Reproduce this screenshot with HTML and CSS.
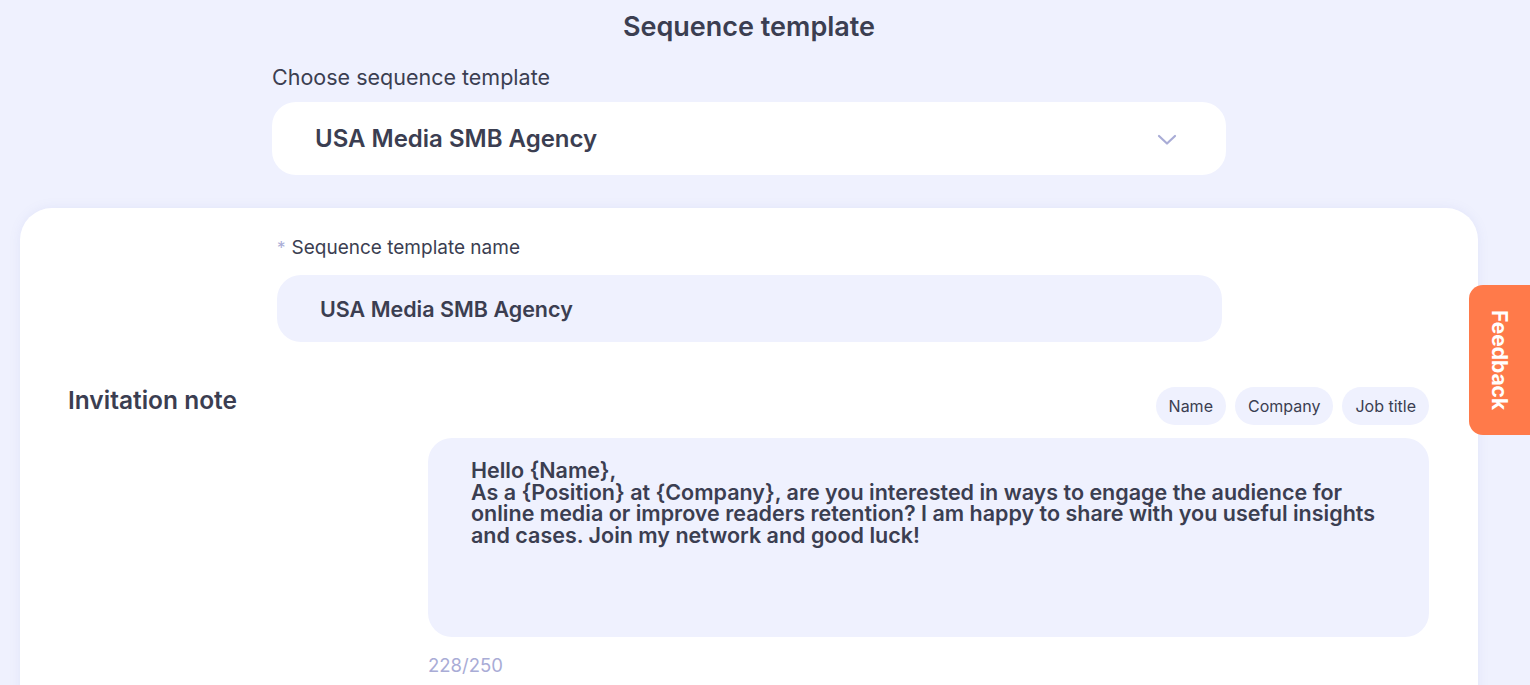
FILE: index.html
```html
<!DOCTYPE html>
<html lang="en">
<head>
<meta charset="utf-8">
<title>Sequence template</title>
<link rel="stylesheet" href="styles.css">
</head>
<body>
<main class="page">
  <h1 class="title">Sequence template</h1>
  <section class="choose">
    <div class="choose-label">Choose sequence template</div>
    <div class="select">
      <span class="select-value">USA Media SMB Agency</span>
      <svg class="chevron" width="20" height="12" viewBox="0 0 20 12"><path d="M2 2 L10 9.5 L18 2" fill="none" stroke="#a9acd6" stroke-width="2.2" stroke-linecap="round" stroke-linejoin="round"/></svg>
    </div>
  </section>
  <section class="card">
    <div class="field">
      <div class="field-label"><span class="req">*</span>Sequence template name</div>
      <div class="input">USA Media SMB Agency</div>
    </div>
    <div class="note-row">
      <div class="note-label">Invitation note</div>
      <div class="note-body">
        <div class="chips">
          <span class="chip">Name</span>
          <span class="chip">Company</span>
          <span class="chip">Job title</span>
        </div>
        <div class="textarea">Hello {Name},
As a {Position} at {Company}, are you interested in ways to engage the audience for
online media or improve readers retention? I am happy to share with you useful insights
and cases. Join my network and good luck!</div>
        <div class="counter">228/250</div>
      </div>
    </div>
  </section>
</main>
<div class="feedback">Feedback</div>
</body>
</html>
```

FILE: styles.css
```css
html, body {
  margin: 0;
  padding: 0;
  height: 100%;
  overflow: hidden;
}
body {
  background: #eff1fe;
  font-family: Inter, "Noto Sans", "Liberation Sans", sans-serif;
  color: #3b3e51;
  position: relative;
}
.page {
  width: 1530px;
}
.title {
  margin: 0;
  height: 53px;
  line-height: 53px;
  text-align: center;
  font-size: 27px;
  font-weight: 600;
  width: 1498px;
}
.choose {
  margin-left: 272px;
  width: 954px;
}
.choose-label {
  font-size: 21.5px;
  line-height: 49px;
  height: 49px;
}
.select {
  height: 73px;
  background: #ffffff;
  border-radius: 24px;
  display: flex;
  align-items: center;
  justify-content: space-between;
  padding: 0 49px 0 43px;
}
.select-value {
  font-size: 24px;
  font-weight: 600;
}
.chevron {
  display: block;
  margin-top: 2px;
}
.card {
  margin-top: 33px;
  margin-left: 20px;
  width: 1361px;
  padding: 28px 49px 40px 48px;
  background: #ffffff;
  border-radius: 32px;
  box-shadow: 0 0 12px rgba(120, 130, 210, 0.10);
  min-height: 600px;
}
.field {
  margin-left: 209px;
  width: 945px;
}
.field-label {
  font-size: 19px;
  line-height: 24px;
  margin-bottom: 15px;
}
.req {
  color: #a9acd6;
  margin-right: 6px;
  font-size: 17px;
}
.input {
  height: 67px;
  background: #eff1fe;
  border-radius: 24px;
  display: flex;
  align-items: center;
  padding-left: 43px;
  font-size: 21.5px;
  font-weight: 600;
}
.note-row {
  display: flex;
  margin-top: 45px;
}
.note-label {
  width: 360px;
  flex: none;
  font-size: 24.5px;
  font-weight: 600;
  line-height: 28px;
  margin-top: -1px;
}
.note-body {
  flex: 1;
}
.chips {
  display: flex;
  justify-content: flex-end;
  gap: 9px;
}
.chip {
  height: 38px;
  line-height: 38px;
  padding: 0 13px;
  border-radius: 19px;
  background: #eff1fe;
  font-size: 16px;
}
.textarea {
  margin-top: 13px;
  height: 199px;
  box-sizing: border-box;
  background: #eff1fe;
  border-radius: 24px;
  padding: 22px 43px;
  white-space: pre;
  font-size: 21.5px;
  font-weight: 600;
  line-height: 21.5px;
}
.counter {
  margin-top: 16px;
  font-size: 18.5px;
  line-height: 24px;
  color: #a9acd6;
}
.feedback {
  position: absolute;
  right: 0;
  top: 285px;
  width: 61px;
  height: 150px;
  background: #ff7a4a;
  border-radius: 14px 0 0 14px;
  color: #ffffff;
  font-size: 21px;
  font-weight: 700;
  writing-mode: vertical-rl;
  display: flex;
  align-items: center;
  justify-content: center;
}
```
